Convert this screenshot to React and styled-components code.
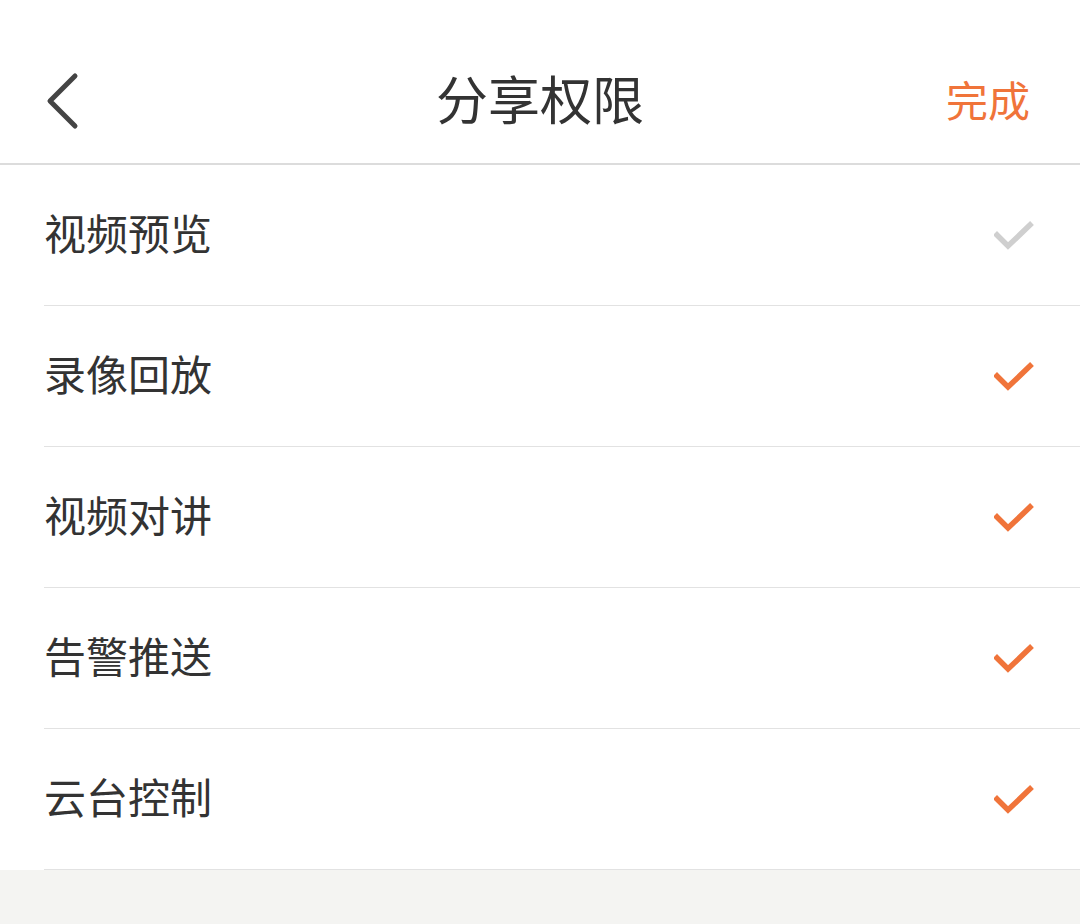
import React from 'react'
import styled, { createGlobalStyle } from 'styled-components'

const GlobalStyle = createGlobalStyle`
  html, body {
    margin: 0;
    padding: 0;
    background: #f4f4f2;
    font-family: "Noto Sans CJK SC", "Noto Sans", sans-serif;
  }
`

const items = [
  { label: '视频预览', on: false },
  { label: '录像回放', on: true },
  { label: '视频对讲', on: true },
  { label: '告警推送', on: true },
  { label: '云台控制', on: true },
]

function App() {
  return (
    <Page>
      <GlobalStyle />
      <Header>
        <BackButton aria-label="back">
          <svg width="36" height="58" viewBox="0 0 36 58">
            <path d="M31 4 L6 29 L31 54" fill="none" stroke="#444" strokeWidth="5" strokeLinecap="round" strokeLinejoin="round" />
          </svg>
        </BackButton>
        <Title>分享权限</Title>
        <Done>完成</Done>
      </Header>
      <List>
        {items.map((item) => (
          <Row key={item.label}>
            <Label>{item.label}</Label>
            <Check on={item.on ? 1 : 0} />
          </Row>
        ))}
      </List>
    </Page>
  )
}

function Check({ on }) {
  return (
    <CheckBox>
      <svg width="40" height="32" viewBox="0 0 40 32">
        <path d="M3 16 L14 27 L36 6" fill="none" stroke={on ? '#f0743a' : '#cfcfcf'} strokeWidth="5.5" strokeLinecap="square" />
      </svg>
    </CheckBox>
  )
}

export default App

const Page = styled.div`
  width: 1080px;
  min-height: 924px;
  background: #f4f4f2;
`

const Header = styled.div`
  height: 131px;
  padding: 32px 50px 0 44px;
  display: flex;
  align-items: center;
  justify-content: space-between;
  background: #fff;
  border-bottom: 2px solid #dcdcdc;
  position: relative;
`

const BackButton = styled.div`
  width: 40px;
  display: flex;
  align-items: center;
  padding-top: 6px;
`

const Title = styled.div`
  position: absolute;
  left: 0;
  right: 0;
  top: 32px;
  height: 131px;
  display: flex;
  align-items: center;
  justify-content: center;
  font-size: 52px;
  color: #333;
  line-height: 1;
  pointer-events: none;
`

const Done = styled.div`
  font-size: 42px;
  color: #f0743a;
  line-height: 1;
  padding-top: 2px;
`

const List = styled.div`
  background: #fff;
  padding-left: 44px;
`

const Row = styled.div`
  height: 140px;
  display: flex;
  align-items: center;
  justify-content: space-between;
  padding-right: 46px;
  border-bottom: 1px solid #e2e2e2;
`

const Label = styled.div`
  font-size: 42px;
  color: #333;
  line-height: 1;
  padding-bottom: 6px;
`

const CheckBox = styled.div`
  display: flex;
  align-items: center;
`
